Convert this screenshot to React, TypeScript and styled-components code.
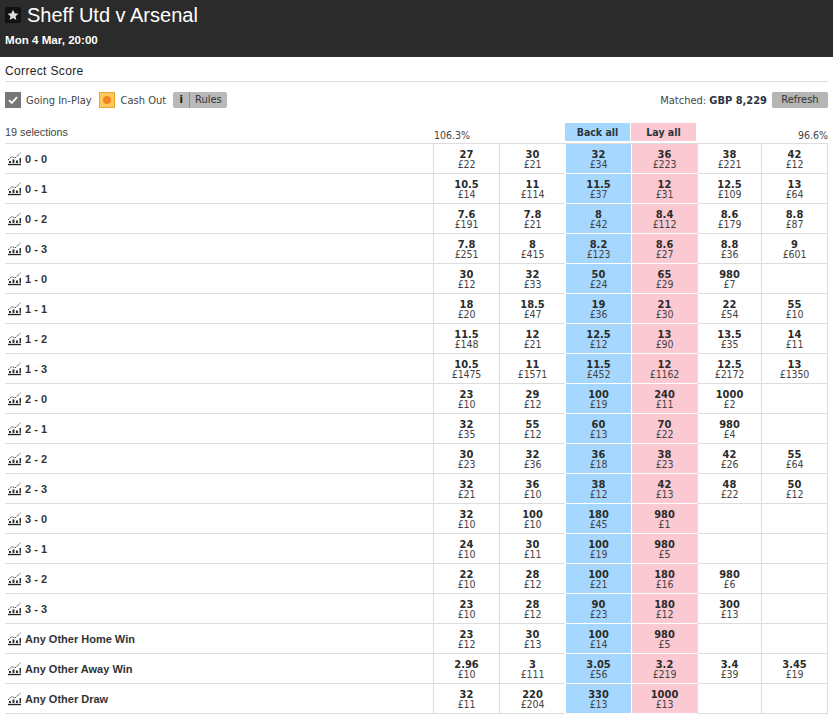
import styled, { createGlobalStyle } from "styled-components";

const GlobalStyle = createGlobalStyle`
  html, body {
    margin: 0;
    padding: 0;
    background: #fff;
  }
`;

const Page = styled.div`
  width: 833px;
  height: 718px;
  overflow: hidden;
  font-family: "Liberation Sans", Arial, sans-serif;
  color: #303030;
`;
const Header = styled.div`
  height: 57px;
  box-sizing: border-box;
  background-color: #2b2b2b;
  color: #fff;
  padding: 3px 5px 0;
`;
const TitleRow = styled.div`
  display: flex;
  align-items: center;
  gap: 6px;
  height: 24px;
`;
const StarBox = styled.div`
  width: 16px;
  height: 16px;
  border-radius: 2px;
  background-color: #111;
  display: flex;
  align-items: center;
  justify-content: center;
`;
const Title = styled.div`
  font-size: 20px;
  line-height: 24px;
`;
const DateText = styled.div`
  margin-top: 6px;
  font-size: 11.6px;
  line-height: 14px;
  font-weight: 700;
`;
const Content = styled.div`
  padding: 0 5px;
`;
const MarketName = styled.div`
  height: 25px;
  box-sizing: border-box;
  padding-top: 7px;
  border-bottom: 1px solid #ddd;
  font-size: 12px;
  line-height: 14px;
  letter-spacing: 0.35px;
  color: #222;
`;
const Toolbar = styled.div`
  display: flex;
  align-items: center;
  height: 16px;
  margin-top: 10px;
  font-family: "DejaVu Sans", Verdana, sans-serif;
  font-stretch: condensed;
  font-size: 11px;
  color: #444;
`;
const CheckBox = styled.div`
  width: 16px;
  height: 16px;
  background-color: #777;
  display: flex;
  align-items: center;
  justify-content: center;
  margin-right: 5px;
`;
const CashIcon = styled.div`
  width: 14px;
  height: 14px;
  border: 1px solid #e6a92e;
  background-color: #fdc95a;
  display: flex;
  align-items: center;
  justify-content: center;
  margin: 0 6px 0 7px;
  &::after {
    content: "";
    width: 8px;
    height: 8px;
    border-radius: 50%;
    background-color: #f58220;
  }
`;
const RulesButton = styled.div`
  display: flex;
  height: 16px;
  margin-left: 7px;
  background-color: #b9b9b9;
  border-radius: 2px;
  line-height: 16px;
  color: #333;
`;
const RulesInfo = styled.div`
  width: 16px;
  text-align: center;
  font-weight: 700;
  color: #111;
  border-right: 1px solid #8e8e8e;
`;
const RulesText = styled.div`
  padding: 0 5px;
`;
const Matched = styled.div`
  margin-left: auto;
  margin-right: 5px;
  white-space: nowrap;
  b {
    color: #2b3440;
  }
`;
const RefreshButton = styled.div`
  width: 56px;
  height: 16px;
  background-color: #b5b5b5;
  border-radius: 2px;
  line-height: 16px;
  text-align: center;
  color: #333;
`;
const Grid = styled.div`
  display: grid;
  grid-template-columns: 428px 66px 66px 66px 66px 64px 66px;
  width: 823px;
`;
const SummaryRow = styled(Grid)`
  height: 20px;
  margin-top: 15px;
  border-bottom: 1px solid #ddd;
  box-sizing: content-box;
  font-size: 10px;
  color: #444;
`;
const Selections = styled.div`
  font-size: 10.8px;
  line-height: 12px;
  padding-top: 3px;
`;
const Percent = styled.div<{ $right?: boolean }>`
  grid-column: span 2;
  font-family: "DejaVu Sans", Verdana, sans-serif;
  font-stretch: condensed;
  font-size: 10.5px;
  line-height: 12px;
  padding-top: 6px;
  padding-left: 1px;
  text-align: ${(p) => (p.$right ? "right" : "left")};
  margin-right: ${(p) => (p.$right ? "-1px" : "0")};
`;
const AllButton = styled.div<{ $kind: "back" | "lay" }>`
  height: 18px;
  margin-right: 1px;
  background-color: ${(p) => (p.$kind === "back" ? "#a6d8ff" : "#fac9d1")};
  font-family: "DejaVu Sans", Verdana, sans-serif;
  font-stretch: condensed;
  font-size: 10.5px;
  line-height: 18px;
  font-weight: 700;
  text-align: center;
  color: #2b3440;
`;
const Row = styled(Grid)`
  height: 29px;
  border-bottom: 1px solid #ddd;
  border-right: 1px solid #ddd;
  box-sizing: content-box;
  width: 822px;
`;
const RunnerCell = styled.div`
  display: flex;
  align-items: center;
  gap: 2px;
  padding-left: 2px;
  font-size: 11px;
  font-weight: 700;
  color: #333;
`;
const PriceCell = styled.div<{ $kind?: "back" | "lay" }>`
  box-sizing: border-box;
  margin-bottom: ${(p) => (p.$kind ? "-1px" : "0")};
  height: ${(p) => (p.$kind ? "30px" : "29px")};
  border-left: 1px solid ${(p) => (p.$kind ? "#fff" : "#ddd")};
  border-bottom: ${(p) => (p.$kind ? "1px solid #fff" : "0")};
  background-color: ${(p) =>
    p.$kind === "back" ? "#a6d8ff" : p.$kind === "lay" ? "#fac9d1" : "transparent"};
  text-align: center;
  padding-top: 6px;
  color: #2b2b2b;
`;
const Price = styled.div`
  font-family: "DejaVu Sans", Verdana, sans-serif;
  font-stretch: condensed;
  font-size: 11px;
  line-height: 10px;
  font-weight: 700;
`;
const Stake = styled.div`
  font-family: "DejaVu Sans", Verdana, sans-serif;
  font-stretch: condensed;
  font-size: 10.5px;
  line-height: 8px;
  letter-spacing: -0.1px;
  color: #444;
`;

const ChartIcon = () => (
  <svg width="16" height="14" viewBox="0 0 16 14" fill="none">
    <path d="M1 8 L5 4.5 L8 6 L13.5 1" stroke="#333" strokeWidth="1" strokeDasharray="1.4 0.8" />
    <path d="M2 9h2v2H2zM5.5 7.5h2V11h-2zM9 8.5h2V11H9zM12.5 6h1.5v5h-1.5z" fill="#333" />
    <path d="M1 12.5h13" stroke="#222" strokeWidth="1.4" />
  </svg>
);

// [name, back2, back1, back0, lay0, lay1, lay2], each price is "odds|stake"
const rows: string[][] = [
  ["0 - 0", "27|22", "30|21", "32|34", "36|223", "38|221", "42|12"],
  ["0 - 1", "10.5|14", "11|114", "11.5|37", "12|31", "12.5|109", "13|64"],
  ["0 - 2", "7.6|191", "7.8|21", "8|42", "8.4|112", "8.6|179", "8.8|87"],
  ["0 - 3", "7.8|251", "8|415", "8.2|123", "8.6|27", "8.8|36", "9|601"],
  ["1 - 0", "30|12", "32|33", "50|24", "65|29", "980|7", ""],
  ["1 - 1", "18|20", "18.5|47", "19|36", "21|30", "22|54", "55|10"],
  ["1 - 2", "11.5|148", "12|21", "12.5|12", "13|90", "13.5|35", "14|11"],
  ["1 - 3", "10.5|1475", "11|1571", "11.5|452", "12|1162", "12.5|2172", "13|1350"],
  ["2 - 0", "23|10", "29|12", "100|19", "240|11", "1000|2", ""],
  ["2 - 1", "32|35", "55|12", "60|13", "70|22", "980|4", ""],
  ["2 - 2", "30|23", "32|36", "36|18", "38|23", "42|26", "55|64"],
  ["2 - 3", "32|21", "36|10", "38|12", "42|13", "48|22", "50|12"],
  ["3 - 0", "32|10", "100|10", "180|45", "980|1", "", ""],
  ["3 - 1", "24|10", "30|11", "100|19", "980|5", "", ""],
  ["3 - 2", "22|10", "28|12", "100|21", "180|16", "980|6", ""],
  ["3 - 3", "23|10", "28|12", "90|23", "180|12", "300|13", ""],
  ["Any Other Home Win", "23|12", "30|13", "100|14", "980|5", "", ""],
  ["Any Other Away Win", "2.96|10", "3|111", "3.05|56", "3.2|219", "3.4|39", "3.45|19"],
  ["Any Other Draw", "32|11", "220|204", "330|13", "1000|13", "", ""],
];

const kindFor = (i: number) => (i === 2 ? "back" : i === 3 ? "lay" : undefined);

export default function App() {
  return (
    <Page>
      <GlobalStyle />
      <Header>
        <TitleRow>
          <StarBox>
            <svg width="12" height="12" viewBox="0 0 24 24" fill="#ddd">
              <path d="M12 1.5l3.2 7 7.6.8-5.7 5.1 1.6 7.5L12 18.1l-6.7 3.8 1.6-7.5-5.7-5.1 7.6-.8z" />
            </svg>
          </StarBox>
          <Title>Sheff Utd v Arsenal</Title>
        </TitleRow>
        <DateText>Mon 4 Mar, 20:00</DateText>
      </Header>
      <Content>
        <MarketName>Correct Score</MarketName>
        <Toolbar>
          <CheckBox>
            <svg width="12" height="12" viewBox="0 0 12 12" fill="none">
              <path d="M2 6.2l2.8 2.8L10 3.2" stroke="#fff" strokeWidth="1.8" />
            </svg>
          </CheckBox>
          Going In-Play
          <CashIcon />
          Cash Out
          <RulesButton>
            <RulesInfo>i</RulesInfo>
            <RulesText>Rules</RulesText>
          </RulesButton>
          <Matched>
            Matched: <b>GBP 8,229</b>
          </Matched>
          <RefreshButton>Refresh</RefreshButton>
        </Toolbar>
        <SummaryRow>
          <Selections>19 selections</Selections>
          <Percent>106.3%</Percent>
          <AllButton $kind="back">Back all</AllButton>
          <AllButton $kind="lay">Lay all</AllButton>
          <Percent $right>96.6%</Percent>
        </SummaryRow>
        {rows.map(([name, ...prices]) => (
          <Row key={name}>
            <RunnerCell>
              <ChartIcon />
              {name}
            </RunnerCell>
            {prices.map((p, i) => {
              const [odds, stake] = p.split("|");
              return (
                <PriceCell key={i} $kind={kindFor(i)}>
                  {p && <Price>{odds}</Price>}
                  {p && <Stake>£{stake}</Stake>}
                </PriceCell>
              );
            })}
          </Row>
        ))}
      </Content>
    </Page>
  );
}
